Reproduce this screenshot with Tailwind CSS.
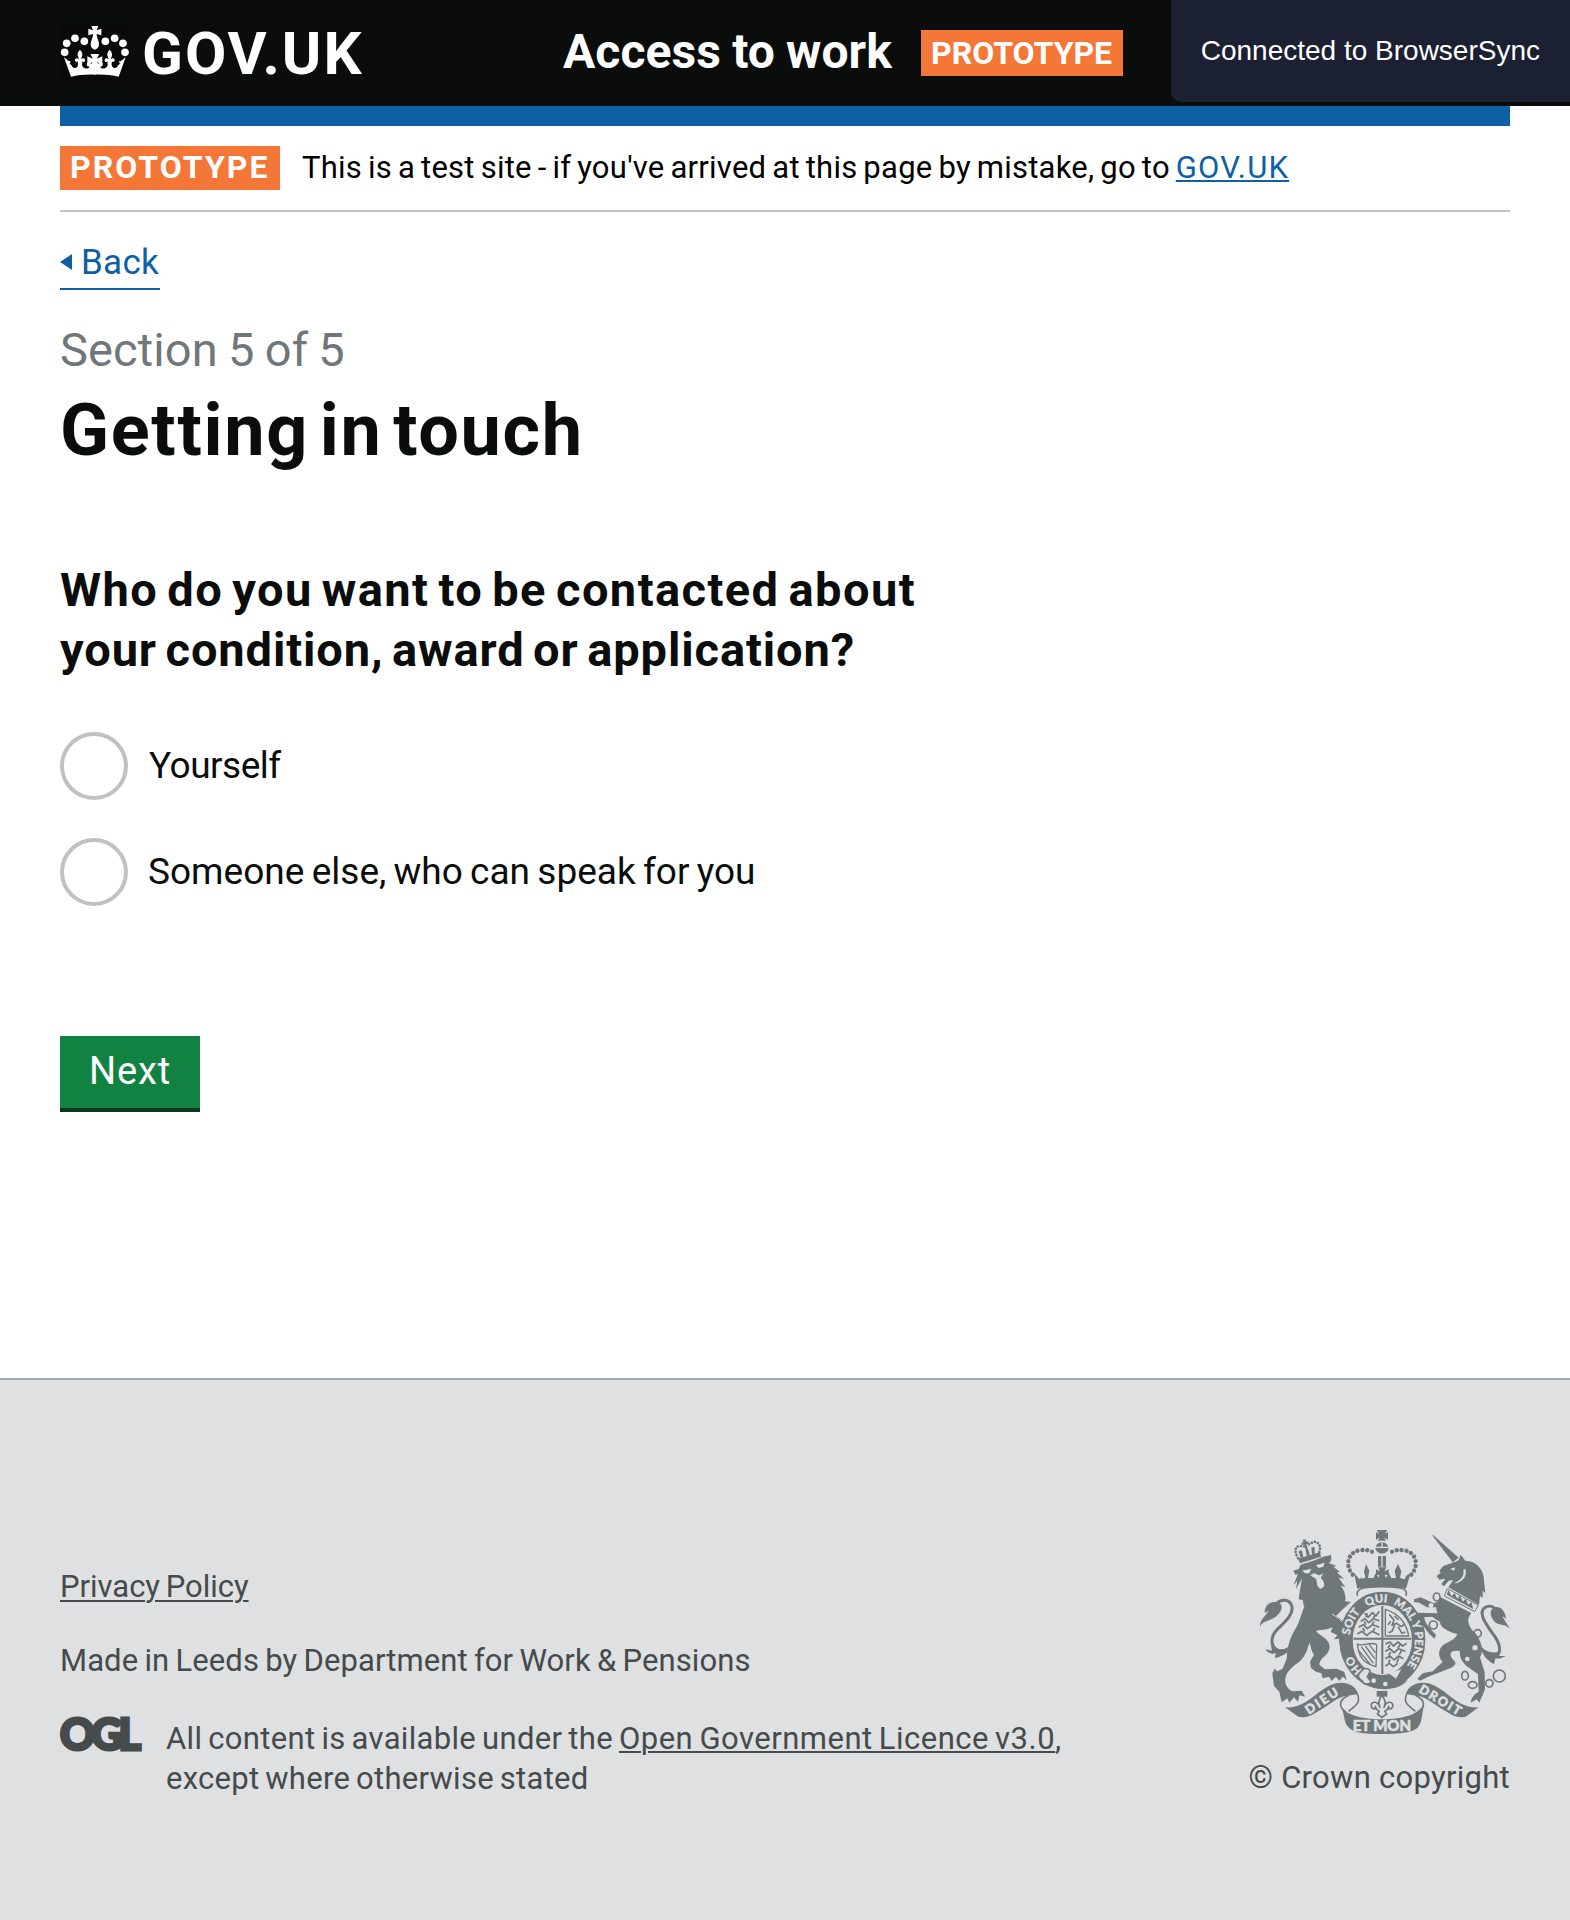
<!DOCTYPE html>
<html lang="en">
<head>
<meta charset="utf-8">
<title>Getting in touch</title>
<script src="https://cdn.jsdelivr.net/npm/@tailwindcss/browser@4"></script>
</head>
<body class="bg-white font-['Roboto',sans-serif] text-[#0b0c0c]">
<div class="flex min-h-[1920px] flex-col">

<header class="flex h-[106px] bg-[#0b0c0c] pl-[60px] text-white">
  <div class="flex w-[503px]">
    <div class="mt-[24px] h-[62px] w-[70px] bg-[#0a0a0a]">
      <svg class="block h-[62px] w-[70px]" viewBox="30 27 210 186" fill="#fff">
        <g id="half">
          <circle cx="44" cy="112" r="11.5"/><circle cx="50" cy="85" r="11.5"/><circle cx="75" cy="70" r="11.5"/><circle cx="103" cy="79" r="11.5"/>
          <path d="M90 104C98 112 99 120 95 127L93 133C98 127 106 129 105 137C104 141 99 142 97 139L96 150C99 162 114 164 119 155C113 156 108 150 112 144C116 141 122 146 128 146L135 146V179C108 178 84 180 63 185L42 127L57 139C62 136 63 141 59 146L66 152C66 158 76 162 82 155C85 151 84 146 83 139C80 143 76 140 75 136C75 129 83 128 87 134L85 127C81 120 82 112 90 104Z"/>
        </g>
        <use href="#half" transform="matrix(-1 0 0 1 269 0)"/>
        <path d="M124 33H145L140 46L154 41V61L140 57C139 66 147 77 147 88C147 98 141 103 134.500 104C128 103 122 98 122 88C122 77 130 66 129 57L115 61V41L129 46Z"/>
        <path d="M121 117H148L140 131L157 124V151L142 141L146 160H123L127 141L112 151V124L129 131Z"/>
      </svg>
    </div>
    <span class="pl-[12px] text-[60px] leading-[108px] font-bold tracking-[2px]">GOV.UK</span>
  </div>
  <span class="w-[358px] text-[48px] leading-[104px] font-bold tracking-[0.100px] [word-spacing:-1px] whitespace-nowrap">Access to work</span>
  <span class="mt-[30px] h-[46px] w-[202px] bg-[#f47738] pl-[10px] text-[32px] leading-[46px] font-bold">PROTOTYPE</span>
</header>
<div class="absolute top-0 right-0 h-[102px] rounded-bl-[10px] bg-[#1b2032] px-[30px] font-['Liberation_Sans',sans-serif] text-[28px] leading-[101px] text-white">Connected to BrowserSync</div>

<main class="mx-[60px]">
  <div class="h-5 bg-[#0e60a4]"></div>
  <div class="flex h-[86px] border-b-2 border-[#bfc1c3] pt-5">
    <strong class="h-[44px] w-[220px] bg-[#f47738] pl-[10px] text-[32px] leading-[43px] font-bold tracking-[2.050px] text-white">PROTOTYPE</strong>
    <p class="pl-[22px] text-[31px] leading-[43px] tracking-[0.245px] [word-spacing:-2px] whitespace-nowrap text-black">This is a test site - if you've arrived at this page by mistake, go to <a href="#" class="tracking-[1.200px] text-[#0e60a4] underline decoration-2 underline-offset-2">GOV.UK</a></p>
  </div>
  <a href="#" class="mt-[24px] flex h-[54px] w-[100px] items-center border-b-2 border-[#0e60a4] text-[35px] leading-[52px] tracking-[0.300px] text-[#0e60a4]">
    <svg class="mr-[9px] h-4 w-3" viewBox="0 0 12 16"><path d="M0 8L12 0V16Z" fill="#0e60a4"/></svg><span class="pt-[2px]">Back</span>
  </a>
  <p class="mt-[30px] text-[47px] leading-[60px] tracking-[0.100px] [word-spacing:-1.500px] text-[#6f777b]">Section 5 of 5</p>
  <h1 class="text-[72px] leading-[101px] font-bold tracking-[1.700px] [word-spacing:-9px]">Getting in touch</h1>
  <h2 class="mt-[79px] text-[47px] leading-[60px] font-bold [word-spacing:-4px]"><span class="tracking-[1.420px]">Who do you want to be contacted about</span><br><span class="tracking-[0.890px]">your condition, award or application?</span></h2>
  <div class="mt-[52px] flex flex-col gap-[38px] text-[37px] leading-[67px]">
    <label class="flex h-[68px] gap-5"><span class="size-[68px] rounded-full border-4 border-[#bfc1c3]"></span><span class="pl-px tracking-[-0.500px]">Yourself</span></label>
    <label class="flex h-[68px] gap-5"><span class="size-[68px] rounded-full border-4 border-[#bfc1c3]"></span><span class="tracking-[0.020px] [word-spacing:-2px]">Someone else, who can speak for you</span></label>
  </div>
  <button class="mt-[130px] block h-[76px] w-[140px] border-b-4 border-[#053a1b] bg-[#118241] pb-[2px] pl-[29px] text-left text-[38px] leading-[70px] tracking-[0.900px] text-white">Next</button>
</main>

<footer class="mt-[266px] flex grow items-start justify-between border-t-2 border-[#a1acb2] bg-[#dee0e2] px-[60px] text-[31px] leading-[40px] text-[#454a4c]">
  <div class="pt-[187px]">
    <p class="tracking-[-0.020px] [word-spacing:-2px]"><a href="#" class="underline decoration-2 underline-offset-[3px]">Privacy Policy</a></p>
    <p class="mt-[34px] tracking-[0.080px] [word-spacing:-1.500px]">Made in Leeds by Department for Work &amp; Pensions</p>
    <div class="mt-[38px] flex">
      <svg class="-mt-[2px] mr-[25px] h-[35px] w-[81px] overflow-visible" viewBox="0 0 81 35" fill="#454a4c" stroke="#454a4c" stroke-width="3"><text x="0" y="33" font-family="Lato" font-weight="900" font-size="43" textLength="81" lengthAdjust="spacing">OGL</text></svg>
      <p class="whitespace-nowrap [word-spacing:-2px]"><span class="tracking-[0.320px]">All content is available under the <a href="#" class="tracking-[0.490px] underline decoration-2 underline-offset-2">Open Government Licence v3.0</a>,</span><br><span class="tracking-[0.270px]">except where otherwise stated</span></p>
    </div>
  </div>
  <div class="flex flex-col items-end pt-[150px]">
    <svg class="h-[204px] w-[250px]" viewBox="90 60 750 612" fill="#6f777b" stroke-linejoin="round">
      <!-- lion -->
      <path d="M190 182L206 177L212 164L246 154L280 140L303 135L304 150L297 160L320 168L310 170L330 186L320 187L342 206L326 203L346 232L332 226L343 245L347 265L345 274L363 276L338 298L318 318C340 330 354 350 360 372L368 392L360 418L352 404L345 413L340 398L328 404L328 386L312 388L322 376L302 366L308 352C285 362 270 358 258 363C268 378 300 385 299 412C296 440 270 440 268 464L285 478L320 476L343 486L350 510L338 500L328 513L318 500L304 513L298 500L278 505L274 490L258 485L243 474L240 455L252 434C242 420 243 405 238 398C232 420 225 440 208 455C185 472 162 488 166 518C170 532 178 542 192 544L215 542L226 560L208 556L204 576L192 562L178 578L172 565L155 577L148 545L132 528L127 490L134 476L142 484L158 476L170 446C173 400 182 380 200 350C214 325 218 290 238 262L222 290L218 270L206 268L210 240L216 205L198 238L202 212L190 226L204 192L196 194Z"/>
      <path d="M216 182L244 176L238 190L226 190ZM258 166L284 158L280 170L266 174ZM240 196L252 190L268 196L280 190L272 204C285 215 288 232 272 236C258 232 262 214 258 206Z" fill="#dee0e2"/>
      <path d="M306 312C335 330 352 346 362 378" fill="none" stroke="#dee0e2" stroke-width="3"/>
      <path d="M160 426C120 420 118 385 140 360C165 335 190 315 186 290C180 268 155 264 138 282" fill="none" stroke="#6f777b" stroke-width="9"/>
      <path d="M150 280C130 270 105 278 104 308L116 302C104 322 90 328 90 350C98 330 120 335 140 318C154 306 160 290 150 280ZM180 405C165 425 135 420 122 402L126 422L106 418C115 432 128 432 138 430L134 444C155 440 170 430 180 420Z"/>
      <!-- lion's crown -->
      <path d="M204 146L270 126L273 140L210 160Z"/>
      <g fill="none" stroke="#6f777b" stroke-width="8" stroke-linecap="round" stroke-dasharray="0.100 9.500"><path d="M204 144C192 124 194 108 212 108L226 110"/><path d="M268 126C275 106 264 94 250 96L234 104"/></g>
      <path d="M217 90L228 88L227 95L235 94L236 102L229 102L240 136L230 138L224 104L216 105L215 97L221 97ZM206 124L215 120L220 142L212 144ZM244 112L254 112L254 132L246 134Z"/>
      <!-- unicorn -->
      <path d="M606 75L610 76L686 143L668 157Z"/>
      <path d="M668 158L686 151L692 134L706 152C738 152 762 178 762 212L766 250L758 242L758 264L750 258L747 284L655 232L670 210L656 212L642 229L634 222L646 206L628 209L620 198L632 188L628 182L640 168Z"/>
      <path d="M660 177L676 172L672 182ZM706 176C714 202 692 220 672 220C690 212 704 200 700 180Z" fill="#dee0e2"/>
      <path d="M652 236L745 286L734 305L643 258Z" fill="#dee0e2" stroke="#6f777b" stroke-width="3"/>
      <path d="M650 254L656 240L664 258L674 250L682 266L690 256L698 275L708 266L714 284L724 276L730 298Z"/>
      <path d="M632 262L724 309C706 330 716 352 738 372C752 392 764 420 750 442L764 486L765 538L748 578L740 568L722 578C726 558 736 550 746 546L744 492L712 470C694 455 688 440 690 424C660 418 656 432 668 448C684 460 674 468 662 474L600 498L570 512L562 506L578 490L608 484L638 456C620 436 624 408 656 396C664 390 676 388 682 372C650 364 630 350 630 336L606 320L582 322L588 340L606 362L618 374L614 386L598 372L574 340L560 318L564 308L622 310L618 292L590 292L568 278L552 276L552 268L572 262L590 270L612 280L624 274Z"/>
      <g fill="none" stroke="#6f777b" stroke-width="5"><ellipse cx="620" cy="261" rx="10" ry="12"/><ellipse cx="610" cy="345" rx="12" ry="12"/><ellipse cx="743" cy="370" rx="11" ry="11"/><ellipse cx="705" cy="497" rx="10" ry="13"/><ellipse cx="728" cy="525" rx="13" ry="10"/><ellipse cx="778" cy="520" rx="11" ry="11"/><circle cx="808" cy="498" r="18"/></g>
      <g fill="#dee0e2"><circle cx="603" cy="286" r="7"/><circle cx="735" cy="413" r="8"/><circle cx="712" cy="447" r="7"/></g>
      <path d="M780 440C812 445 818 415 795 380C770 345 742 310 764 293C778 284 792 290 800 302" fill="none" stroke="#6f777b" stroke-width="9"/>
      <path d="M784 300C800 280 826 296 828 326L816 318L840 356C820 338 800 350 788 328C782 318 780 308 784 300ZM752 408C768 428 795 432 812 422L802 438L828 438C805 450 800 444 796 446L792 462C772 452 756 436 752 408Z"/>
      <!-- royal crown -->
      <path d="M440 60H472L464 72L474 66V90L462 82L468 92H444L450 82L438 90V66L448 72ZM438 110C440 92 472 92 474 110ZM436 114H476C474 136 438 136 436 114ZM444 138H468V170H444Z"/>
      <path d="M456 92V114M456 138V170" stroke="#dee0e2" stroke-width="4"/>
      <g fill="none" stroke="#6f777b" stroke-width="13" stroke-linecap="round" stroke-dasharray="0.100 14.500"><path d="M368 194C346 170 350 128 388 121C410 118 424 122 434 130"/><path d="M544 194C566 170 562 128 524 121C502 118 488 122 478 130"/></g>
      <path d="M372 188L388 208L398 198L392 206L406 204L402 184L408 162L418 182L414 204L430 204L438 188L446 204L448 194L438 196V178L450 184L444 172H470L462 184L476 178V196L464 194L468 204L476 188L484 204L498 204L494 182L504 162L514 184L510 204L524 208L528 198L542 188L528 236C490 226 420 226 382 236Z"/>
      <path d="M382 258C376 236 400 230 456 230C512 230 536 236 528 258" fill="none" stroke="#6f777b" stroke-width="5"/>
      <!-- garter -->
      <ellipse cx="457" cy="390" rx="109" ry="125" fill="none" stroke="#6f777b" stroke-width="40"/>
      <path id="garter" d="M457 505A98 114 0 0 1 457 277A98 114 0 0 1 457 505" fill="none"/>
      <g fill="#dee0e2" stroke="#dee0e2" stroke-width="0.800" font-family="Lato" font-weight="900" font-size="34">
        <text><textPath href="#garter" startOffset="66">HO</textPath></text>
        <text><textPath href="#garter" startOffset="182">SOIT</textPath></text>
        <text><textPath href="#garter" startOffset="284">QUI</textPath></text>
        <text><textPath href="#garter" startOffset="366">MAL Y PENSE</textPath></text>
      </g>
      <path d="M328 386L352 408L362 380L366 404L358 420L348 410L338 424Z"/>
      <!-- quartered shield -->
      <path d="M370 386H544M457 288V492" stroke="#6f777b" stroke-width="6"/>
      <g fill="none" stroke="#6f777b" stroke-width="5">
        <path d="M466 298V378H536C530 340 508 312 466 298Z" stroke-width="4"/>
        <path d="M478 314L492 330L486 346L500 340L514 350L524 342M482 334L474 344M494 346L486 364L476 368M504 350L516 370L526 366M494 318L506 330"/>
        <path d="M404 310L414 322L428 308L438 318L448 304M392 334L404 326L416 338L430 326L448 332M386 352L400 344L412 356L428 344L448 352M382 372L396 364L410 376L426 364L448 374M412 310L408 322M436 314L430 324M402 334L408 344M432 334L426 344M398 354L404 364M434 354L430 364"/>
        <path d="M466 402L480 396L490 408L504 396L518 408L530 400M466 424L480 416L492 428L506 416L526 424M466 446L480 438L492 450L506 438L520 446M466 468L478 460L490 470L504 460M480 404L474 414M510 404L504 414M482 426L476 436M514 422L508 434M480 448L476 458M506 446L500 458"/>
        <path d="M382 402C400 412 420 392 440 404L438 470L426 466C400 456 386 440 382 402ZM394 410L430 460M406 408L434 446M418 404L436 428M386 422L420 462" stroke-width="4"/>
      </g>
      <!-- buckle and belt -->
      <path d="M400 482C440 502 490 504 526 486L530 514C500 546 430 544 394 516Z"/>
      <path d="M476 490L514 478L498 506Z" fill="#dee0e2"/>
      <path d="M392 486C400 470 420 474 420 486L412 500L424 516C418 526 398 524 396 512C382 506 382 492 392 486Z" fill="#dee0e2" stroke="#6f777b" stroke-width="5"/>
      <circle cx="431" cy="512" r="7" fill="#dee0e2"/><circle cx="466" cy="522" r="7" fill="#dee0e2"/>
      <!-- fleur-de-lis -->
      <path d="M440 543H472V560H440Z"/>
      <path d="M456 556C468 572 468 582 462 592C470 570 492 574 488 590C484 600 476 598 476 590C474 600 468 602 464 604L470 612L456 622L442 612L448 604C444 602 438 600 436 590C436 598 428 600 424 590C420 574 442 570 450 592C444 582 444 572 456 556Z" fill="#dee0e2" stroke="#6f777b" stroke-width="5"/>
      <!-- motto ribbon -->
      <path d="M165 592C232 598 262 534 318 520C348 514 378 526 384 552L352 557C320 560 290 592 262 605C240 620 222 624 205 620Z"/>
      <path d="M746 592C680 598 650 534 594 520C564 514 534 526 528 552L560 557C592 560 622 592 650 605C672 620 690 624 707 620Z"/>
      <g fill="none" stroke="#6f777b" stroke-width="5"><path d="M378 545C400 580 370 590 356 604M356 556C325 570 325 592 348 606"/><path d="M534 545C512 580 542 590 556 604M556 556C587 570 587 592 564 606"/></g>
      <path d="M332 588C345 612 390 628 456 628C522 628 567 612 582 582C576 612 576 640 562 654C545 668 510 672 456 672C400 672 370 668 354 650C340 635 345 612 332 588Z"/>
      <g fill="#dee0e2" stroke="#dee0e2" stroke-width="1.500" font-family="Lato" font-weight="900">
        <text x="368" y="662" textLength="175" font-size="45">ET MON</text>
        <text transform="translate(236 614) rotate(-33)" textLength="110" font-size="38">DIEU</text>
        <text transform="translate(564 545) rotate(31)" textLength="140" font-size="38">DROIT</text>
      </g>
    </svg>
    <p class="mt-[24px] tracking-[0.280px] whitespace-nowrap">© Crown copyright</p>
  </div>
</footer>
</div>
</body>
</html>
